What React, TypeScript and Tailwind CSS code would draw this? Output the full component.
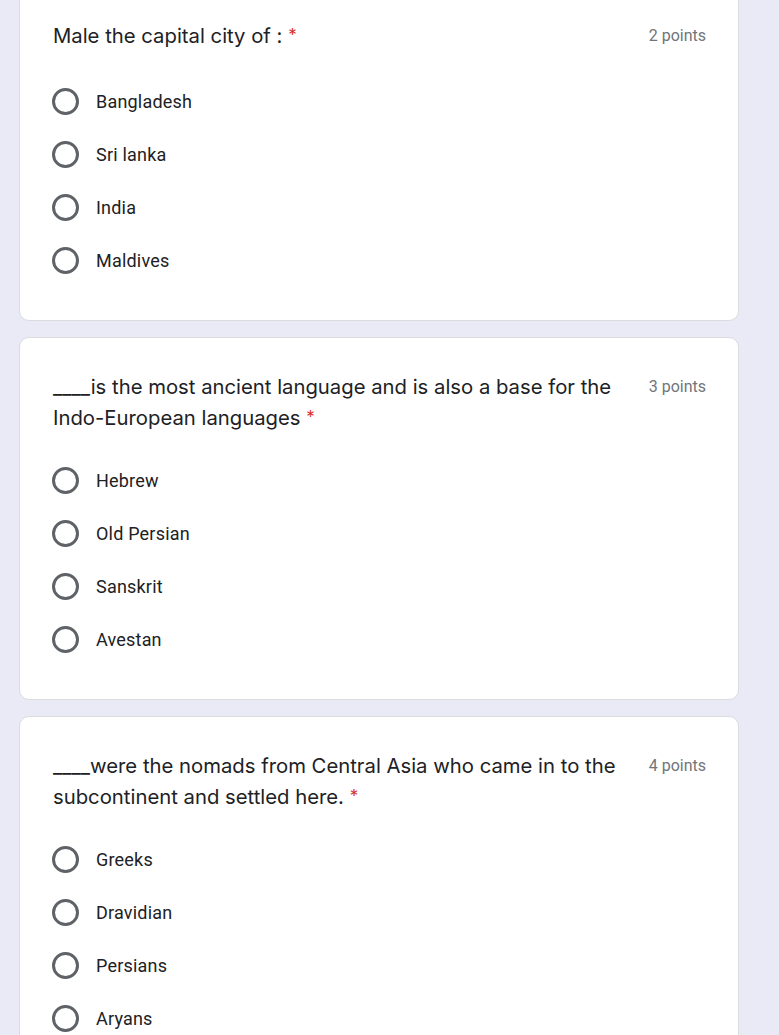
import React from 'react';

type Question = {
  title: React.ReactNode;
  points: number;
  options: string[];
};

const questions: Question[] = [
  {
    title: 'Male the capital city of :',
    points: 2,
    options: ['Bangladesh', 'Sri lanka', 'India', 'Maldives'],
  },
  {
    title: '____is the most ancient language and is also a base for the Indo-European languages',
    points: 3,
    options: ['Hebrew', 'Old Persian', 'Sanskrit', 'Avestan'],
  },
  {
    title: '____were the nomads from Central Asia who came in to the subcontinent and settled here.',
    points: 4,
    options: ['Greeks', 'Dravidian', 'Persians', 'Aryans'],
  },
];

const Radio = () => (
  <span className="block w-[27px] h-[27px] rounded-full border-[3px] border-[#5f6368] shrink-0" />
);

const QuestionCard = ({ q, first }: { q: Question; first?: boolean }) => (
  <div className="bg-white border border-[#dadce0] rounded-[10px] pl-[33px] pr-[32px] pt-[33px] pb-[33px]">
    <div className="flex justify-between items-start gap-6">
      <div className="text-[20.3px] leading-[31px] text-[#202124] font-['Inter',sans-serif]">
        {q.title}{' '}
        <span className="text-[17px] leading-none align-[2px] text-[#d93025]">*</span>
      </div>
      <div className="text-[16px] leading-[31px] text-[#70757a] font-['Roboto',sans-serif] whitespace-nowrap">
        {q.points} points
      </div>
    </div>
    <div className={(first ? 'mt-[24px]' : 'mt-[21px]') + ' flex flex-col'}>
      {q.options.map((o) => (
        <div key={o} className="h-[53px] flex items-center gap-[17px] -ml-px">
          <Radio />
          <span className="text-[18px] text-[#202124] font-['Roboto',sans-serif] tracking-[0.2px]">{o}</span>
        </div>
      ))}
    </div>
  </div>
);

export default function App() {
  return (
    <div className="min-h-screen bg-[#e9eaf6] overflow-hidden">
      <div className="w-[720px] ml-[19px] -mt-[14px] flex flex-col gap-[16px]">
        {questions.map((q, i) => (
          <QuestionCard key={i} q={q} first={i === 0} />
        ))}
      </div>
    </div>
  );
}
